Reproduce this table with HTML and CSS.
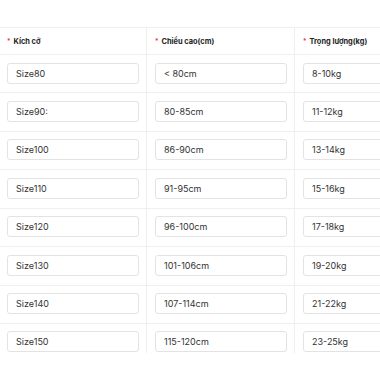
FILE: index.html
```html
<!DOCTYPE html>
<html lang="vi">
<head>
<meta charset="utf-8">
<link rel="stylesheet" href="styles.css">
</head>
<body>
<div class="wrap">
  <div class="table">
    <div class="th"><span class="req">*</span>Kích cỡ</div>
    <div class="th"><span class="req">*</span>Chiều cao(cm)</div>
    <div class="th"><span class="req">*</span>Trọng lượng(kg)</div>

    <div class="td"><div class="input">Size80</div></div>
    <div class="td"><div class="input">&lt; 80cm</div></div>
    <div class="td"><div class="input">8-10kg</div></div>

    <div class="td"><div class="input">Size90:</div></div>
    <div class="td"><div class="input">80-85cm</div></div>
    <div class="td"><div class="input">11-12kg</div></div>

    <div class="td"><div class="input">Size100</div></div>
    <div class="td"><div class="input">86-90cm</div></div>
    <div class="td"><div class="input">13-14kg</div></div>

    <div class="td"><div class="input">Size110</div></div>
    <div class="td"><div class="input">91-95cm</div></div>
    <div class="td"><div class="input">15-16kg</div></div>

    <div class="td"><div class="input">Size120</div></div>
    <div class="td"><div class="input">96-100cm</div></div>
    <div class="td"><div class="input">17-18kg</div></div>

    <div class="td"><div class="input">Size130</div></div>
    <div class="td"><div class="input">101-106cm</div></div>
    <div class="td"><div class="input">19-20kg</div></div>

    <div class="td"><div class="input">Size140</div></div>
    <div class="td"><div class="input">107-114cm</div></div>
    <div class="td"><div class="input">21-22kg</div></div>

    <div class="td last"><div class="input">Size150</div></div>
    <div class="td last"><div class="input">115-120cm</div></div>
    <div class="td last"><div class="input">23-25kg</div></div>
  </div>
</div>
</body>
</html>
```

FILE: styles.css
```css
html, body {
  margin: 0;
  padding: 0;
  background: #fff;
}
body {
  font-family: Inter, "Noto Sans", "Liberation Sans", sans-serif;
  color: #333;
  width: 380px;
  height: 380px;
  overflow: hidden;
}
.wrap {
  padding-top: 27px;
  margin-left: -1px;
  height: 326px;
  overflow: hidden;
}
.table {
  display: grid;
  grid-template-columns: 148px 148px 148px;
  grid-auto-rows: 38.43px;
  grid-template-rows: 27px;
  border-top: 1px solid #efefef;
  width: 444px;
}
.th, .td {
  box-sizing: border-box;
  border-right: 1px solid #efefef;
  border-bottom: 1px solid #efefef;
  padding: 0 7px 0 8px;
}
.th {
  display: flex;
  align-items: center;
  font-size: 7.4px;
  font-weight: 700;
  color: #222;
}
.req {
  color: #f5222d;
  font-weight: 400;
  margin-right: 3px;
  font-size: 7px;
  position: relative;
  top: 0.5px;
}
.td {
  padding-top: 7.5px;
}
.td.last {
  border-bottom: none;
}
.input {
  box-sizing: border-box;
  height: 21px;
  width: 132px;
  border: 1px solid #e3e3e3;
  border-radius: 3px;
  padding-left: 8px;
  display: flex;
  align-items: center;
  font-size: 9px;
  color: #333;
}
```
